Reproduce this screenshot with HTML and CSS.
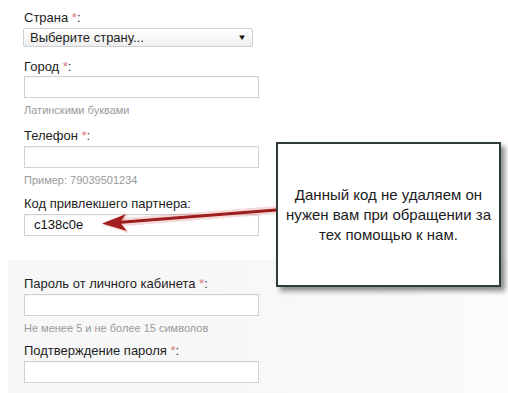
FILE: index.html
```html
<!DOCTYPE html>
<html lang="ru">
<head>
<meta charset="utf-8">
<link rel="stylesheet" href="styles.css">
</head>
<body>
<div class="page">
  <div class="sec sec-top">
    <div class="field">
      <div class="label">Страна <span class="req">*</span>:</div>
      <div class="select"><span>Выберите страну...</span><span class="caret">▼</span></div>
    </div>
    <div class="field f-city">
      <div class="label">Город <span class="req">*</span>:</div>
      <div class="input"></div>
      <div class="hint">Латинскими буквами</div>
    </div>
    <div class="field f-phone">
      <div class="label">Телефон <span class="req">*</span>:</div>
      <div class="input"></div>
      <div class="hint">Пример: 79039501234</div>
    </div>
    <div class="field f-code">
      <div class="label">Код привлекшего партнера:</div>
      <div class="input val">c138c0e</div>
    </div>
  </div>
  <div class="sec sec-gray">
    <div class="field">
      <div class="label">Пароль от личного кабинета <span class="req">*</span>:</div>
      <div class="input"></div>
      <div class="hint">Не менее 5 и не более 15 символов</div>
    </div>
    <div class="field f-confirm">
      <div class="label">Подтверждение пароля <span class="req">*</span>:</div>
      <div class="input"></div>
    </div>
  </div>

  <svg class="arrow" width="508" height="393" viewBox="0 0 508 393">
    <line x1="276" y1="210" x2="118" y2="222.5" stroke="rgba(220,90,90,0.22)" stroke-width="8" stroke-linecap="round"/>
    <path d="M101,223.5 L127,213 L121,222 L128,232 Z" fill="rgba(220,90,90,0.25)" transform="translate(1,1.5)"/>
    <line x1="276" y1="210" x2="118" y2="222.5" stroke="#9c1e1e" stroke-width="3"/>
    <path d="M102,223.5 L126,214 L120,222.5 L127,231 Z" fill="#a31f1f"/>
  </svg>

  <div class="callout">
    <p>Данный код не удаляем он нужен вам при обращении за тех помощью к нам.</p>
  </div>
</div>
</body>
</html>
```

FILE: styles.css
```css
html, body {
  margin: 0;
  padding: 0;
  background: #ffffff;
}
body {
  width: 508px;
  height: 393px;
  overflow: hidden;
  font-family: "Liberation Sans", Arial, sans-serif;
  color: #222;
}
.page {
  position: relative;
  width: 508px;
  height: 393px;
}
.sec {
  padding-left: 24px;
}
.sec-top {
  padding-top: 10px;
  height: 260px;
  box-sizing: border-box;
}
.sec-gray {
  margin-left: 8px;
  padding-left: 16px;
  padding-top: 16px;
  height: 133px;
  box-sizing: border-box;
  background: linear-gradient(to right, #f7f7f7 0%, #f8f8f8 70%, #fbfbfb 100%);
}
.label {
  font-size: 13px;
  line-height: 16px;
  color: #1e1e1e;
  margin-bottom: 2px;
}
.req {
  color: #d47a7a;
}
.select {
  width: 230px;
  height: 19px;
  box-sizing: border-box;
  margin-left: -1px;
  border: 1px solid #cfcfcf;
  border-radius: 2px;
  background: linear-gradient(to bottom, #ffffff, #eeeeee);
  display: flex;
  align-items: center;
  justify-content: space-between;
  padding: 0 6px 0 6px;
  font-size: 13px;
  color: #222;
}
.caret {
  font-size: 8px;
  color: #111;
  transform: scaleX(1.2);
}
.input {
  width: 235px;
  height: 22px;
  box-sizing: border-box;
  border: 1px solid #d2d2d2;
  background: #fff;
  box-shadow: inset 0 1px 1px rgba(0,0,0,0.04);
}
.input.val {
  font-size: 13px;
  line-height: 20px;
  padding-left: 9px;
  color: #111;
}
.hint {
  font-size: 11px;
  line-height: 13px;
  color: #9a9a9a;
  margin-top: 6px;
}
.f-city {
  margin-top: 12px;
}
.f-city .input {
  margin-top: -1px;
}
.f-phone {
  margin-top: 11px;
}
.f-code {
  margin-top: 9px;
}
.f-confirm {
  margin-top: 8px;
}
.arrow {
  position: absolute;
  left: 0;
  top: 0;
  pointer-events: none;
}
.callout {
  position: absolute;
  left: 276px;
  top: 142px;
  width: 225px;
  height: 145px;
  box-sizing: border-box;
  border: 2px solid #2d3b3b;
  background: #ffffff;
  box-shadow: 4px 4px 5px rgba(0,0,0,0.45);
  display: flex;
  align-items: center;
  justify-content: center;
  padding: 0 8px;
}
.callout p {
  margin: 0;
  text-align: center;
  font-size: 15px;
  line-height: 20px;
  color: #1c1c1c;
}
```
